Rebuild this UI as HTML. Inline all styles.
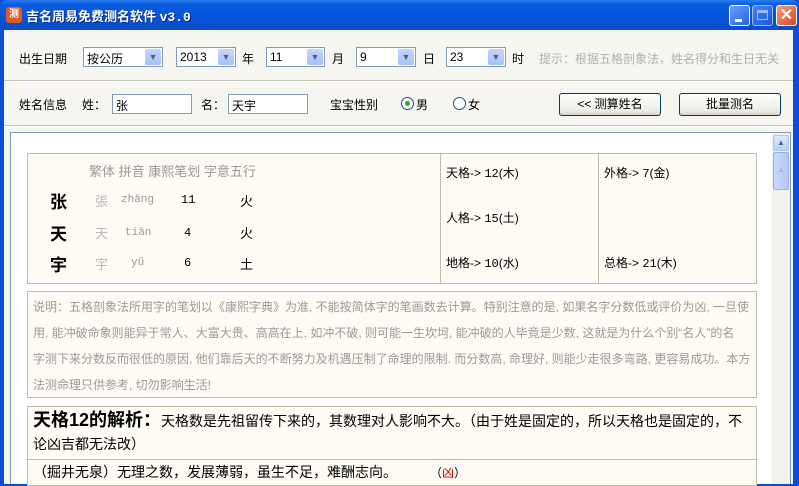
<!DOCTYPE html>
<html><head><meta charset="utf-8"><style>
*{margin:0;padding:0;box-sizing:border-box}
body{width:799px;height:484px;overflow:hidden;position:relative;font-family:"Liberation Sans","Noto Sans CJK SC",sans-serif;font-size:12px;color:#000;background:#0a4ed8}
.a{position:absolute}
#title{left:0;top:0;width:799px;height:30px;background:linear-gradient(#2a7cf0 0,#0a5ce0 15%,#0553d8 60%,#0a4ec8 100%);border-radius:7px 7px 0 0}
#title .t{left:26px;top:6px;color:#fff;font-weight:bold;font-size:13px;text-shadow:1px 1px #0a2a80}
.wb{top:5px;width:21px;height:21px;border:1px solid #fff;border-radius:3px;background:linear-gradient(135deg,#6aa0ff,#2860e0)}
#client{left:4px;top:30px;width:789px;height:454px;background:#f6f5f0}
.lbl{font-size:12px}
.sel{height:20px;border:1px solid #7f9db9;background:#fff;font-size:12px;padding:2px 3px}
.sel .ar{position:absolute;right:1px;top:1px;width:16px;height:16px;background:linear-gradient(#c5d6fc,#a8c0f8);border-radius:2px;color:#4d6185;font-size:9px;text-align:center;line-height:16px}
.inp{height:20px;border:1px solid #7f9db9;background:#fff;padding:2px 3px}
.btn{height:23px;border:1px solid #003c74;border-radius:3px;background:linear-gradient(#fff,#ecebe6 80%,#d6d0c5);text-align:center;line-height:21px}
.hr{height:2px;border-top:1px solid #c4c2b8;border-bottom:1px solid #fff}
#panel{left:10px;top:132px;width:781px;height:352px;background:#fff;border:1px solid #7f9db9;border-bottom:none}
.box{background:#fdfbf3;border:1px solid #c0bca8}
.g{color:#999}
.mono{font-family:"Liberation Mono","Noto Sans CJK SC",monospace}
.nl{white-space:nowrap;height:26px}
</style></head><body>
<div id="title" class="a">
 <div class="a" style="left:6px;top:7px;width:16px;height:16px;background:#e05a20;border-radius:3px;color:#fff;font-size:10px;text-align:center;line-height:16px;font-weight:bold">测</div>
 <div class="a t">吉名周易免费测名软件 <span class="mono">v3.0</span></div>
 <div class="a wb" style="left:729px"><div class="a" style="left:5px;top:13px;width:7px;height:3px;background:#fff"></div></div>
 <div class="a wb" style="left:752px;opacity:.6"><div class="a" style="left:4px;top:4px;width:11px;height:10px;border:1px solid #fff;border-top-width:3px"></div></div>
 <div class="a wb" style="left:776px;background:linear-gradient(135deg,#f0a080,#d84820);color:#fff;font-size:16px;font-weight:bold;text-align:center;line-height:19px">✕</div>
</div>
<div class="a" style="left:793px;top:30px;width:6px;height:454px;background:#0a4ed8"></div>
<div id="client" class="a"></div>

<div class="a lbl" style="left:19px;top:50px">出生日期</div>
<div class="a sel" style="left:83px;top:47px;width:80px">按公历<div class="ar">▼</div></div>
<div class="a sel" style="left:176px;top:47px;width:60px">2013<div class="ar">▼</div></div>
<div class="a lbl" style="left:242px;top:50px">年</div>
<div class="a sel" style="left:266px;top:47px;width:59px">11<div class="ar">▼</div></div>
<div class="a lbl" style="left:332px;top:50px">月</div>
<div class="a sel" style="left:356px;top:47px;width:60px">9<div class="ar">▼</div></div>
<div class="a lbl" style="left:423px;top:50px">日</div>
<div class="a sel" style="left:446px;top:47px;width:60px">23<div class="ar">▼</div></div>
<div class="a lbl" style="left:512px;top:50px">时</div>
<div class="a lbl" style="left:539px;top:50px;color:#b0b0b0">提示：根据五格剖象法，姓名得分和生日无关</div>
<div class="a hr" style="left:4px;top:80px;width:789px"></div>

<div class="a lbl" style="left:19px;top:96px">姓名信息</div>
<div class="a lbl" style="left:82px;top:96px">姓：</div>
<div class="a inp" style="left:112px;top:94px;width:80px">张</div>
<div class="a lbl" style="left:201px;top:96px">名：</div>
<div class="a inp" style="left:228px;top:94px;width:80px">天宇</div>
<div class="a lbl" style="left:330px;top:96px">宝宝性别</div>
<div class="a" style="left:401px;top:97px;width:13px;height:13px;border:1px solid #1c5180;border-radius:50%;background:#fff"><div class="a" style="left:3px;top:3px;width:5px;height:5px;border-radius:50%;background:#2fa82f"></div></div>
<div class="a lbl" style="left:416px;top:96px">男</div>
<div class="a" style="left:453px;top:97px;width:13px;height:13px;border:1px solid #1c5180;border-radius:50%;background:#fff"></div>
<div class="a lbl" style="left:468px;top:96px">女</div>
<div class="a btn" style="left:559px;top:93px;width:102px">&lt;&lt; 测算姓名</div>
<div class="a btn" style="left:679px;top:93px;width:102px">批量测名</div>
<div class="a hr" style="left:4px;top:125px;width:789px"></div>

<div id="panel" class="a"></div>
<div class="a" style="left:772px;top:133px;width:18px;height:351px;background:#f3f1ec;border-left:1px solid #eeede5"></div>
<div class="a" style="left:773px;top:135px;width:16px;height:16px;background:linear-gradient(#dce8fe,#b8cdf8);border:1px solid #b0c4ee;border-radius:2px;font-size:8px;color:#4d6185;text-align:center;line-height:14px">▲</div>
<div class="a" style="left:773px;top:152px;width:16px;height:38px;background:linear-gradient(90deg,#c8d8fc,#b4c8f4);border:1px solid #98b0e8;border-radius:2px;font-size:8px;color:#8aa0d0;text-align:center;line-height:36px">≡</div>

<div class="a box" style="left:27px;top:153px;width:730px;height:131px"></div>
<div class="a" style="left:440px;top:153px;width:1px;height:131px;background:#c0bca8"></div>
<div class="a" style="left:598px;top:153px;width:1px;height:131px;background:#c0bca8"></div>
<div class="a g" style="left:89px;top:161px;font-size:13px">繁体 拼音 康熙笔划 字意五行</div>
<div class="a" style="left:50px;top:188px;font-size:17px;font-weight:bold">张</div>
<div class="a" style="left:50px;top:220px;font-size:17px;font-weight:bold">天</div>
<div class="a" style="left:50px;top:251px;font-size:17px;font-weight:bold">宇</div>
<div class="a g" style="left:95px;top:191px;font-size:13px;color:#bbb">張</div>
<div class="a g" style="left:95px;top:223px;font-size:13px;color:#bbb">天</div>
<div class="a g" style="left:95px;top:254px;font-size:13px;color:#bbb">宇</div>
<div class="a mono g" style="left:121px;top:194px;font-size:11px">zhāng</div>
<div class="a mono g" style="left:125px;top:227px;font-size:11px">tiān</div>
<div class="a mono g" style="left:131px;top:257px;font-size:11px">yǔ</div>
<div class="a mono" style="left:181px;top:193px">11</div>
<div class="a mono" style="left:184px;top:226px">4</div>
<div class="a mono" style="left:184px;top:256px">6</div>
<div class="a" style="left:240px;top:191px;font-size:13px">火</div>
<div class="a" style="left:240px;top:223px;font-size:13px">火</div>
<div class="a" style="left:240px;top:254px;font-size:13px">土</div>
<div class="a" style="left:446px;top:164px">天格-&gt; <span class="mono">12</span>(木)</div>
<div class="a" style="left:446px;top:209px">人格-&gt; <span class="mono">15</span>(土)</div>
<div class="a" style="left:446px;top:254px">地格-&gt; <span class="mono">10</span>(水)</div>
<div class="a" style="left:604px;top:164px">外格-&gt; <span class="mono">7</span>(金)</div>
<div class="a" style="left:604px;top:254px">总格-&gt; <span class="mono">21</span>(木)</div>

<div class="a box" style="left:27px;top:291px;width:730px;height:107px"></div>
<div class="a" style="left:33px;top:294px;width:722px;font-size:12px;line-height:26px;color:#9a9a9a">
<div class="nl">说明：五格剖象法所用字的笔划以《康熙字典》为准, 不能按简体字的笔画数去计算。特别注意的是, 如果名字分数低或评价为凶, 一旦使</div>
<div class="nl">用, 能冲破命象则能异于常人、大富大贵、高高在上, 如冲不破, 则可能一生坎坷, 能冲破的人毕竟是少数, 这就是为什么个别“名人”的名</div>
<div class="nl">字测下来分数反而很低的原因, 他们靠后天的不断努力及机遇压制了命理的限制. 而分数高, 命理好, 则能少走很多弯路, 更容易成功。本方</div>
<div class="nl">法测命理只供参考, 切勿影响生活!</div>
</div>

<div class="a box" style="left:27px;top:406px;width:730px;height:80px"></div>
<div class="a" style="left:27px;top:459px;width:730px;height:1px;background:#c0bca8"></div>
<div class="a" style="left:33px;top:409px;width:722px;font-size:14px;line-height:23px"><b style="font-size:18px">天格12的解析：</b>天格数是先祖留传下来的，其数理对人影响不大。（由于姓是固定的，所以天格也是固定的，不论凶吉都无法改）</div>
<div class="a" style="left:33px;top:462px;font-size:14px">（掘井无泉）无理之数，发展薄弱，虽生不足，难酬志向。</div>
<div class="a" style="left:430px;top:464px;font-size:12px">（<span style="color:#c00">凶</span>）</div>
</body></html>
